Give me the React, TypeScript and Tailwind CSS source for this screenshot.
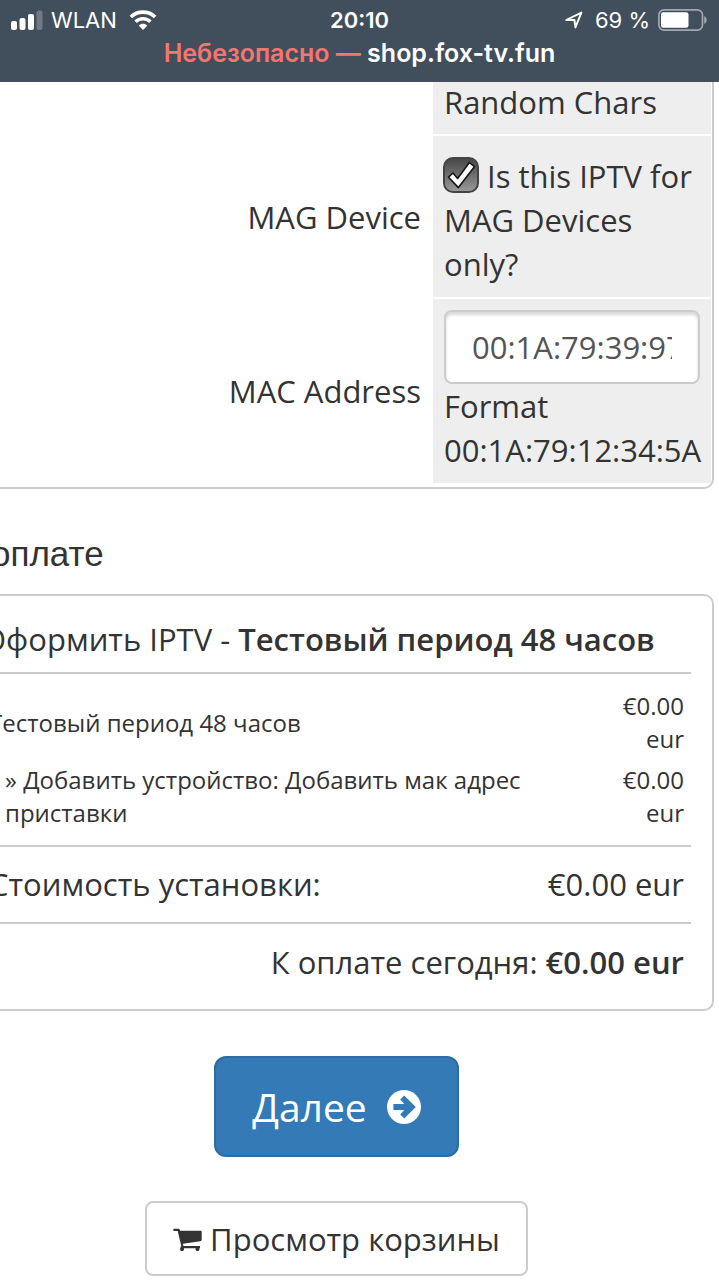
import type { ReactNode } from "react";

function SignalIcon() {
  return (
    <svg viewBox="0 0 32 20" className="h-5 w-8" fill="#fff" aria-hidden="true">
      <rect x="0" y="11" width="6" height="9" rx="2" />
      <rect x="8.5" y="8" width="6" height="12" rx="2" />
      <rect x="17" y="4" width="6" height="16" rx="2" />
      <rect x="25.5" y="0.5" width="6" height="19.5" rx="2" opacity="0.25" />
    </svg>
  );
}

function WifiIcon() {
  return (
    <svg viewBox="0 0 28 20" className="h-5 w-7" fill="none" stroke="#fff" strokeWidth="3.6" aria-hidden="true">
      <path d="M1.9 7.1 C8.5 0.5 19.5 0.5 26.1 7.1" />
      <path d="M6.6 11.7 C10.6 7.7 17.4 7.7 21.4 11.7" />
      <path d="M14 20 L9.8 15.8 C12 13.2 16 13.2 18.2 15.8 Z" fill="#fff" stroke="none" />
    </svg>
  );
}

function LocationIcon() {
  return (
    <svg viewBox="0 0 18 18" className="h-[18px] w-[18px]" fill="none" stroke="#fff" strokeWidth="1.9" strokeLinejoin="round" aria-hidden="true">
      <path d="M1.2 9 L16.4 1.6 L10.4 16.4 L9.4 9 Z" />
    </svg>
  );
}

function BatteryIcon() {
  return (
    <svg viewBox="0 0 50 22" className="h-[22px] w-[50px]" aria-hidden="true">
      <rect x="0.9" y="0.9" width="43.6" height="20.2" rx="5" fill="none" stroke="#fff" strokeOpacity="0.5" strokeWidth="1.7" />
      <rect x="3" y="3.2" width="27.5" height="15.6" rx="2.4" fill="#fff" />
      <path d="M46.2 7.2 C49.4 8 49.4 14 46.2 14.8 Z" fill="#fff" opacity="0.5" />
    </svg>
  );
}

function ArrowCircleIcon() {
  return (
    <svg viewBox="0 0 34 34" className="h-[34px] w-[34px]" aria-hidden="true">
      <circle cx="17" cy="17" r="17" fill="#fff" />
      <path d="M6.4 14.1 H17.3 L13.2 9.6 L17.2 5.4 L28.8 17 L17.2 28.6 L13.2 24.4 L17.3 19.9 H6.4 Z" fill="#337ab7" />
    </svg>
  );
}

function CartIcon() {
  return (
    <svg viewBox="0 -4 29 29" className="h-[29px] w-[29px]" fill="#333" aria-hidden="true">
      <path d="M1.2 0.8 H6.2 L7.3 2.8 H27.8 Q28.7 2.8 28.7 3.8 V11.4 Q28.7 12.9 27.2 13.2 L10 15.8 L10.4 18 H27 V20.3 H26.3 A2 2 0 1 1 22.6 20.3 H10.9 A2 2 0 1 1 7.2 20.3 L8.2 17.8 L4.7 3 H1.2 Q0.2 3 0.2 1.9 Q0.2 0.8 1.2 0.8 Z" />
    </svg>
  );
}

function Checkbox({ id }: { id: string }) {
  return (
    <span className="mr-2 -ml-px inline-grid h-9 w-9 align-[-5px]">
      <input
        id={id}
        type="checkbox"
        defaultChecked
        className="col-start-1 row-start-1 h-9 w-9 appearance-none rounded-[10px] border-2 border-[#444] bg-linear-to-b from-[#484848] to-[#999]"
      />
      <svg viewBox="0 0 36 36" className="pointer-events-none col-start-1 row-start-1 h-9 w-9" aria-hidden="true">
        <path d="M5.5 20.2 L10 16 L14.6 21.5 L26.4 5.6 L31.6 9.6 L15.4 30.6 Z" fill="#fff" stroke="#151515" strokeWidth="1.6" strokeLinejoin="round" />
      </svg>
    </span>
  );
}

function FormRow({ label, children }: { label: ReactNode; children: ReactNode }) {
  return (
    <div className="flex gap-3">
      <div className="flex flex-1 items-center justify-end">{label}</div>
      <div className="w-[278px] shrink-0 bg-[#eee] px-[11px]">{children}</div>
    </div>
  );
}

export default function App() {
  return (
    <div className="min-h-screen overflow-hidden bg-white font-['Open_Sans','Noto_Sans',sans-serif] text-[31px] leading-[44px] text-[#333]">
      <header className="h-[82px] bg-[#414e5c] font-['Inter',sans-serif] text-white">
        <div className="grid h-10 grid-cols-[1fr_auto_1fr] items-center pr-[11px] pl-[11px] text-[22px] leading-6">
          <div className="flex items-center gap-2">
            <SignalIcon />
            <span>WLAN</span>
            <span className="pl-1"><WifiIcon /></span>
          </div>
          <span className="font-semibold">20:10</span>
          <div className="flex items-center justify-end gap-2">
            <LocationIcon />
            <span className="pl-1">69 %</span>
            <BatteryIcon />
          </div>
        </div>
        <p className="text-center text-[25px] leading-[26px] font-semibold">
          <span className="text-[#f5766f]">Небезопасно —</span> shop.fox-tv.fun
        </p>
      </header>

      <main className="-ml-[41px] pr-[5px]">
        <section className="rounded-b-[10px] border-2 border-t-0 border-[#ccc] pr-px pb-1">
          <div className="flex flex-col gap-[2px]">
            <FormRow label={null}>
              <p className="-mt-[2px] pb-[10px]">Random Chars</p>
            </FormRow>
            <FormRow label={<label htmlFor="mag">MAG Device</label>}>
              <p className="pt-[18px] pb-[11px]">
                <Checkbox id="mag" />
                Is this IPTV for MAG Devices only?
              </p>
            </FormRow>
            <FormRow label={<label htmlFor="mac">MAC Address</label>}>
              <div className="py-[11px]">
                <input
                  id="mac"
                  type="text"
                  defaultValue="00:1A:79:39:97:12"
                  className="block h-[74px] w-full rounded-lg border-2 border-[#ccc] bg-white px-[26px] text-[#555] shadow-[inset_0_3px_3px_rgba(0,0,0,0.15)]"
                />
                <p>Format 00:1A:79:12:34:5A</p>
              </div>
            </FormRow>
          </div>
        </section>

        <h2 className="mt-[43px] pl-8 font-['Liberation_Sans',sans-serif] text-[35px] leading-[44px]">оплате</h2>

        <section className="mt-[18px] rounded-[10px] border-2 border-[#ccc] px-[21px] pt-[21px] pb-[25px]">
          <h3 className="border-b-2 border-[#ccc] pb-[11px]">
            Оформить IPTV - <b className="font-semibold">Тестовый период 48 часов</b>
          </h3>
          <div className="flex flex-col gap-2 border-b-2 border-[#ccc] px-[7px] pt-[15px] pb-4 text-[24px] leading-[33px]">
            <div className="flex items-center justify-between">
              <span>Тестовый период 48 часов</span>
              <span className="w-16 text-right">€0.00 eur</span>
            </div>
            <div className="flex items-center justify-between">
              <span className="w-[560px] pl-4">» Добавить устройство: Добавить мак адрес приставки</span>
              <span className="w-16 text-right">€0.00 eur</span>
            </div>
          </div>
          <div className="flex justify-between border-b-2 border-[#ccc] px-[7px] pt-[15px] pb-4">
            <span>Стоимость установки:</span>
            <span>€0.00 eur</span>
          </div>
          <p className="px-[7px] pt-4 text-right">
            К оплате сегодня: <b className="font-semibold">€0.00 eur</b>
          </p>
        </section>

        <div className="mt-[45px] flex flex-col items-center gap-11">
          <button type="button" className="flex h-[101px] items-center gap-5 rounded-xl border-2 border-[#2e6da4] bg-[#337ab7] px-9 text-[39px] text-white">
            Далее
            <ArrowCircleIcon />
          </button>
          <a href="#cart" className="flex h-[75px] items-center gap-2 rounded-lg border-2 border-[#ccc] bg-white px-[26px]">
            <CartIcon />
            Просмотр корзины
          </a>
        </div>
      </main>
    </div>
  );
}
